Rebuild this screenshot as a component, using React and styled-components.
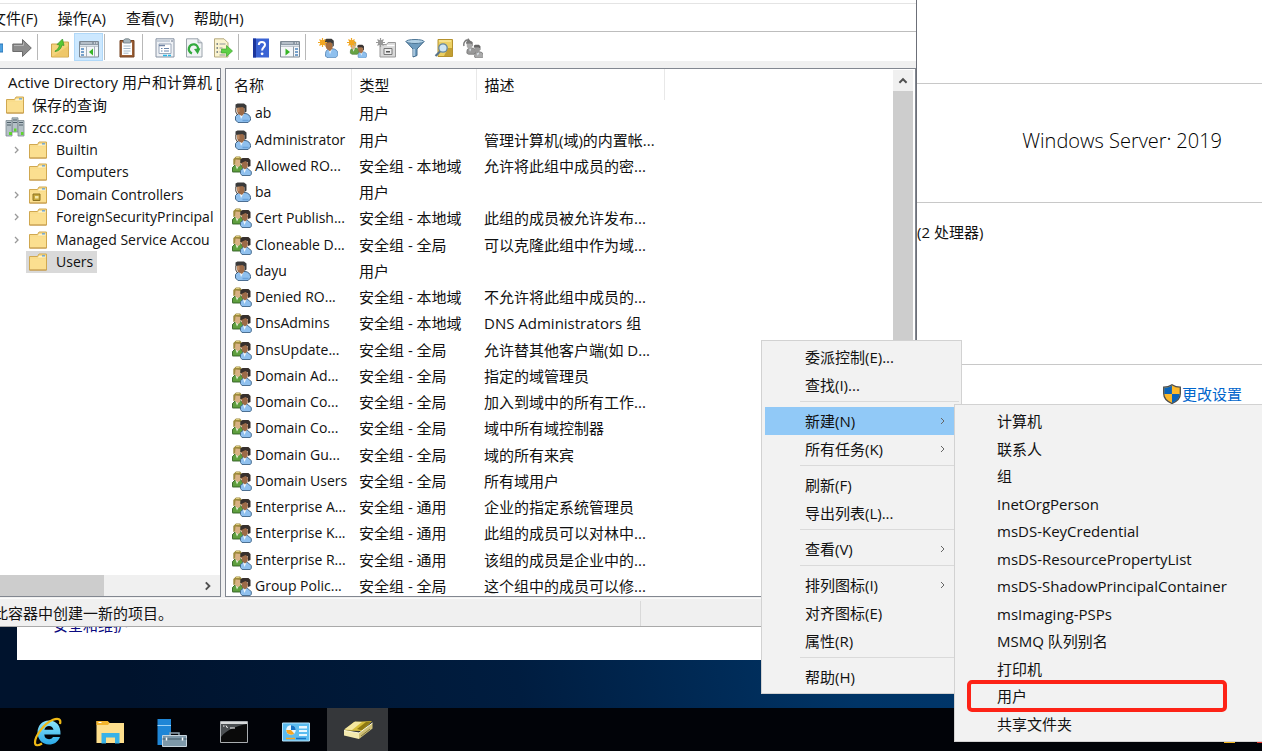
import React from "react";
import styled, { createGlobalStyle } from "styled-components";

const GlobalStyle = createGlobalStyle`
  * { box-sizing: border-box; }
  body {
    margin: 0;
    font-family: "Open Sans", "Noto Sans CJK SC", sans-serif;
    font-size: 15px;
    line-height: 20px;
    color: #111;
  }
  button {
    font: inherit;
    color: inherit;
    background: none;
    border: 0;
    padding: 0;
    text-align: left;
  }
`;

/* ---------- text ---------- */

const Latin = styled.span`
  font-size: 14px;
`;

// In dense lists Latin runs are set one size below the Chinese text around them.
function Text({ children }) {
  return children
    .split(/([\u2e80-\u9fff\u3000-\u303f]+)/)
    .filter(Boolean)
    .map((run, i) =>
      /[\u2e80-\u9fff]/.test(run) ? run : <Latin key={i}>{run}</Latin>
    );
}

/* ---------- icons ---------- */

const Icon = styled.svg`
  display: block;
  flex: none;
  width: ${(p) => p.$size || 20}px;
  height: ${(p) => p.$size || 20}px;
`;

const PersonShape = ({ hair = "#3b3a39", face = "#a9744c", shirt = "#8fc0ee", edge = "#4f7fae" }) => (
  <g>
    <path d="M6 15.500c0-3 2-5 4.500-5h2.500c3 0 5.500 2 5.500 5v1.500l-2.500 2.500H8.500L6 18z" fill={shirt} stroke={edge} strokeWidth=".8" />
    <path d="M9 11l1.500 5 2-5z" fill="#e9f3fc" />
    <path d="M5.500 3h6l1.500 3v4l-2.500 3L7 10.500 6 8z" fill={face} />
    <path d="M5 4.500V1.500L7 .5h5l2.300 2v5L13 9V5.500L11 4z" fill={hair} />
  </g>
);

const UserIcon = () => (
  <Icon viewBox="0 0 20 20">
    <path d="M3.500 13.500l3-3h6.500c3 0 5.500 2.500 5.500 5v1.500L16 19.600H6L3.500 17z" fill="#8fc0ee" stroke="#3f6488" />
    <path d="M7.500 10.500l1.500 5.500 3-5.500z" fill="#eef6fd" />
    <path d="M10.500 17.500h6" stroke="#6ba3da" strokeWidth="1.500" />
    <path d="M4.500 3h6.500l1.500 3v4l-2.500 3L6 11 5 8z" fill="#9c6b48" />
    <path d="M5 4h2.500v5H5z" fill="#bf8b62" />
    <path d="M3.500 5V1.500L5.500.4h6.500l2.500 2v6L12.500 10V5.500L10.500 4z" fill="#3a3a3a" />
    <path d="M3.800 5v4l1.700 3" fill="none" stroke="#4a4038" />
  </Icon>
);

const GroupShape = ({ gray }) => (
  <g>
    <g transform="translate(-4.500 -.5) scale(.82)">
      <PersonShape
        hair={gray ? "#777" : "#b9a65e"}
        face={gray ? "#aaa" : "#d9b387"}
        shirt={gray ? "#999" : "#67a344"}
        edge={gray ? "#555" : "#39702a"}
      />
    </g>
    <g transform="translate(4.500 4) scale(.82)">
      <PersonShape
        hair={gray ? "#666" : "#3b3533"}
        face={gray ? "#999" : "#a9744c"}
        shirt={gray ? "#aaa" : "#8fc0ee"}
        edge={gray ? "#555" : "#4f7fae"}
      />
    </g>
  </g>
);

const GroupIcon = () => (
  <Icon viewBox="0 0 20 20">
    <path d="M.5 15.500v-4l3-3h5l3 4v3.500H.5z" fill="#5f9f3e" stroke="#2f5f23" strokeWidth=".9" />
    <path d="M3.500 9.500l1.500 4 2-4z" fill="#e3efd9" />
    <path d="M2.500 3h5l1.500 3-1 4-2.500 1-2.500-2z" fill="#d8b184" />
    <path d="M1.300 9V3L4 .6h4L10 3v5L8.500 7V4L3.500 3.500 3 8.500z" fill="#9d8a3c" />
    <path d="M4 1.500h3.500" stroke="#dccb7c" />
    <path d="M8.500 17.500v-3l3-2.500h3.500l4.300 3.500v3L18 19.500h-8z" fill="#8fc0ee" stroke="#3f6488" strokeWidth=".9" />
    <path d="M11 12.500l1.500 4.500 2-4.500z" fill="#eef6fd" />
    <path d="M9 5h6l1 3-.5 3.500-2.500 2L10 11z" fill="#9c6b48" />
    <path d="M8.300 7.500V3.500L10.500 2h6L18.500 4v6L16 11V6.500L13.500 5z" fill="#37302d" />
  </Icon>
);

const FolderShape = () => (
  <g>
    <path d="M1.500 18V4.500h8l1.500-2.500h7.500V18z" fill="#f9dc8b" stroke="#d0a850" />
    <path d="M2 17.500V7h16v10.500z" fill="#fbdf90" />
    <path d="M11 4h6.500v1.500H10z" fill="#fdf3cf" />
    <path d="M14 3.200h3v1.300h-3z" fill="#5f9fd8" />
    <path d="M1.500 18h17" stroke="#c1964a" />
  </g>
);

const FolderIcon = ({ ou }) => (
  <Icon viewBox="0 0 20 20">
    <FolderShape />
    {ou && <path d="M5 9h7v6.500H5z" fill="#c8a83d" stroke="#8c7221" />}
    {ou && <path d="M7 11h3.500v2.500H7z" fill="#f4e7a6" />}
  </Icon>
);

const DomainIcon = () => (
  <Icon viewBox="0 0 20 20">
    <g fill="#b4c0c6" stroke="#7b8990" strokeWidth=".8">
      <path d="M7 .8h6V15H7z" />
      <path d="M1 3.500h6V19H1z" />
      <path d="M13 3.500h6V19h-6z" />
    </g>
    <path d="M2 5.500h4M2 8h4M14 5.500h4M14 8h4M8 3h4M8 5.500h4" stroke="#50606a" />
    <path d="M4 15h3v3H4zM16 15h2.500v3H16zM9 11.500h2.500v3H9z" fill="#5fd62c" />
  </Icon>
);

const BackIcon = () => (
  <Icon viewBox="0 0 20 20">
    <path d="M1 10l8-7v3h11v8H9v3z" fill="#4ea1e0" stroke="#2b77b8" />
  </Icon>
);
const ForwardIcon = () => (
  <Icon viewBox="0 0 20 20">
    <path d="M19.300 10L10.500 1.500v4.500H.8v7.500h9.700v5z" fill="#8c8c8c" stroke="#626262" strokeWidth=".9" />
    <path d="M2 7.500h9.500V4.500" stroke="#b4b4b4" fill="none" />
  </Icon>
);
const FolderUpIcon = () => (
  <Icon viewBox="0 0 20 20">
    <path d="M1.500 19V6h10l1.500-2h5.500v15z" fill="#f4d37c" stroke="#cfa64f" />
    <path d="M2 19L18 8v11z" fill="#e9bf5e" opacity=".6" />
    <path d="M5 13c2-1 4-3 4.500-6L7 6.500 12.500 1 14 7.500l-2-.5c-1 4-3 6-7 6.500z" fill="#57c832" stroke="#37972a" strokeWidth=".7" />
  </Icon>
);
const PaneIcon = ({ flip }) => (
  <Icon viewBox="0 0 20 20">
    <path d="M.5 3.500h19v15.500H.5z" fill="#f5f7f9" stroke="#7c8893" />
    <path d="M1 4h18v4.500H1z" fill="#8d99a5" />
    <path d="M2 5h11M1 7.500h18" stroke="#dce3ea" />
    <path d="M15 5h1M17 5h1.500" stroke="#fff" />
    {flip ? (
      <g>
        <path d="M13.500 8.500V19" stroke="#8d99a5" />
        <path d="M15 11h3M15 14h3M15 17h3" stroke="#4d86bd" strokeWidth="1.300" />
        <path d="M5.500 10.500l4.500 3.500-4.500 3.500z" fill="#37b526" />
      </g>
    ) : (
      <g>
        <path d="M7.500 8.500V19M15.500 8.500V19" stroke="#a5afb9" />
        <path d="M2 11h3M2 14h3M2 17h3" stroke="#4d86bd" strokeWidth="1.300" />
        <path d="M14 10.500v7L10 14z" fill="#37b526" />
      </g>
    )}
  </Icon>
);
const ClipboardIcon = () => (
  <Icon viewBox="0 0 20 20">
    <path d="M3 2.500h14v16.500H3z" fill="#9b5f36" stroke="#744321" />
    <path d="M5 4.500h10V17H5z" fill="#fdfefe" />
    <path d="M6.500 8h7M6.500 10.500h7M6.500 13h7M6.500 15.200h5" stroke="#a4b8c8" />
    <path d="M6.500 2L8.500.8h3l2 1.200v3h-7z" fill="#a7b4ba" stroke="#6c7a80" strokeWidth=".8" />
  </Icon>
);
const PropertiesIcon = () => (
  <Icon viewBox="0 0 20 20">
    <path d="M1 .8h18V19H1z" fill="#eef1f5" stroke="#8893a3" />
    <path d="M2 3h13" stroke="#b9c3d0" strokeWidth="1.500" />
    <path d="M16 3h2" stroke="#68758a" />
    <path d="M4 6h12v9.500H4z" fill="#fff" stroke="#9aa7ba" />
    <path d="M4 7.500h6" stroke="#7185a5" strokeWidth="1.500" />
    <path d="M6 10.500h1.500M9 10.500h5M6 13h1.500M9 13h5" stroke="#6b86ab" />
    <path d="M8 17.500h4M13 17.500h3" stroke="#27b5e4" strokeWidth="1.500" />
  </Icon>
);
const RefreshIcon = () => (
  <Icon viewBox="0 0 20 20">
    <path d="M2.500.8H14l4 4V19H2.500z" fill="#f1f3f5" stroke="#9aa3ab" />
    <path d="M14 .8v4h4" fill="#d8dde2" stroke="#9aa3ab" />
    <path d="M8 15.300a4.600 4.600 0 1 1 6-3.600" fill="none" stroke="#33aa3e" strokeWidth="2.400" />
    <path d="M10 11l6.500-.8-2.800 6z" fill="#33aa3e" />
  </Icon>
);
const ExportIcon = () => (
  <Icon viewBox="0 0 20 20">
    <path d="M1.500.8H11l4 4V19H1.500z" fill="#faf3cf" stroke="#b5aa7f" />
    <path d="M3.500 6h1.500M3.500 10h1.500M3.500 14h1.500" stroke="#5d6b76" strokeWidth="1.400" />
    <path d="M6.500 6h6M6.500 10h3M6.500 14h5M6.500 17h6" stroke="#8d949a" />
    <path d="M8.500 11h5V7.500l6 5.500-6 5.500V15h-5z" fill="#5fd046" stroke="#3da32f" strokeWidth=".7" />
  </Icon>
);
const HelpIcon = () => (
  <Icon viewBox="0 0 20 20">
    <path d="M2 .5h16v19H2z" fill="#3a63d4" />
    <path d="M2 .5h3v19H2z" fill="#1c369c" />
    <path d="M7.800 7c0-4 6.200-4 6.200-.3 0 2.600-2.900 2.500-2.900 5.800" fill="none" stroke="#fff" strokeWidth="2" />
    <circle cx="11.100" cy="15.800" r="1.400" fill="#fff" />
  </Icon>
);
const Spark = ({ color = "#f2a621" }) => (
  <g stroke={color}>
    <path d="M4.500 0v9M0 4.500h9M1.500 1.500l6 6M7.500 1.500l-6 6" strokeWidth="1.200" />
    <circle cx="4.500" cy="4.500" r="2.200" fill={color} />
  </g>
);
const NewUserIcon = () => (
  <Icon viewBox="0 0 20 20">
    <g transform="translate(1.500 .3)"><PersonShape face="#a86f3f" /></g>
    <Spark />
  </Icon>
);
const NewGroupIcon = () => (
  <Icon viewBox="0 0 20 20">
    <g transform="translate(3 3) scale(.86)"><GroupShape /></g>
    <Spark />
  </Icon>
);
const NewOuIcon = () => (
  <Icon viewBox="0 0 20 20">
    <path d="M4 19V6.500h6.500L12 4.500h7.500V19z" fill="#d9d9d9" stroke="#999" />
    <path d="M11 7.500h7.500" stroke="#fff" strokeWidth="1.300" />
    <path d="M8 10.500h8v6H8z" fill="#ececec" stroke="#777" />
    <path d="M10 13h4v1.500h-4z" fill="#555" />
    <Spark color="#989898" />
  </Icon>
);
const FilterIcon = () => (
  <Icon viewBox="0 0 20 20">
    <path d="M1 3.500L8 11v8l4-1.500V11l7-7.500z" fill="#6f9dc0" stroke="#41698a" />
    <path d="M9 11v7" stroke="#c6dcec" strokeWidth="1.300" />
    <ellipse cx="10" cy="3.500" rx="9" ry="2" fill="#b4d2e6" stroke="#4e7797" />
  </Icon>
);
const FindIcon = () => (
  <Icon viewBox="0 0 20 20">
    <path d="M4 1.500h14.500v17H4z" fill="#ecd063" stroke="#b5922e" />
    <path d="M14 10h4v8h-8z" fill="#c39f32" />
    <path d="M5 3h12" stroke="#fff2b4" />
    <circle cx="9" cy="10" r="4.200" fill="#cfe6f2" stroke="#66869b" strokeWidth="1.300" />
    <path d="M6 13.500L1.500 18" stroke="#58738a" strokeWidth="2.200" />
  </Icon>
);
const AddToGroupIcon = () => (
  <Icon viewBox="0 0 20 20">
    <g transform="translate(3.500 3) scale(.86)"><GroupShape gray /></g>
    <path d="M1 8C0 4 3 1 6 2.500" fill="none" stroke="#777" strokeWidth="1.400" />
    <path d="M5 0l3 3.500-4 1z" fill="#777" />
  </Icon>
);

const ShieldIcon = () => (
  <Icon viewBox="0 0 20 20">
    <path d="M10 .8c3 2 5.500 2.400 8.300 2.400v6.300c0 5-3.500 8-8.300 10-4.800-2-8.300-5-8.300-10V3.200C4.500 3.200 7 2.800 10 .8z" fill="#fdb92b" stroke="#4d4d4d" strokeWidth="1.300" />
    <path d="M9.900 1.600v8.400H2.300V3.800c3 0 5.200-.6 7.600-2.200z" fill="#0a63b9" />
    <path d="M10 10h7.700c-.3 4.500-3.500 7.200-7.700 8.900z" fill="#0a63b9" />
  </Icon>
);

const Chevron = ({ d = "M4 2l3 3-3 3", size = 10, color = "#666", width = 1 }) => (
  <Icon $size={size} viewBox="0 0 10 10">
    <path d={d} fill="none" stroke={color} strokeWidth={width} />
  </Icon>
);

/* ---------- taskbar icons ---------- */

const ExplorerIcon = () => (
  <Icon $size={30} viewBox="0 0 30 30">
    <defs>
      <linearGradient id="ie" x1="0" y1="0" x2="0" y2="1">
        <stop offset="0" stopColor="#8fe6fb" />
        <stop offset="1" stopColor="#2aa9e8" />
      </linearGradient>
    </defs>
    <path
      d="M16 3.500C9 3.500 4.500 9 4.500 15.500c0 7 5 12 11.500 12 5 0 9-2.500 11-7.500h-7c-1 1.600-2.300 2.200-4 2.200-2.800 0-4.600-1.800-4.700-4.700h16.200C28 9 23.500 3.500 16 3.500zm-4.600 9.300C12 10.500 13.600 9 16 9s4 1.500 4.500 3.800z"
      fill="url(#ie)"
    />
    <path d="M9 26.500c-4 2.500-7 2.500-7-1C2 19 11 6.500 20 2.800c5-2 8.500-.8 7 4.200" fill="none" stroke="#efb915" strokeWidth="2.200" />
  </Icon>
);
const FilesIcon = () => (
  <Icon $size={30} viewBox="0 0 30 30">
    <path d="M1.500 4h11l2 2h14.500v20H1.500z" fill="#fddf8d" />
    <path d="M1.500 4h11l2 2-1.500 2H1.500z" fill="#f3b52e" />
    <path d="M3.500 5.500h3" stroke="#fff" />
    <path d="M6.500 26.500V16h18v10.500h-4.500v-6h-9v6z" fill="#38b2e8" />
  </Icon>
);
const ServerIcon = () => (
  <Icon $size={30} viewBox="0 0 30 30">
    <path d="M.5 2h13.500v26H.5z" fill="#1f86d6" />
    <path d="M.5 8.500H14" stroke="#9fd2f5" />
    <path d="M13 18v-2h9v2" fill="none" stroke="#90a4b0" strokeWidth="1.500" />
    <path d="M5.500 18.500h24V29.500h-24z" fill="#7d98a9" stroke="#c7d5de" />
    <path d="M5.500 22h24" stroke="#3f5664" />
    <path d="M9.500 20.500v3M25.500 20.500v3" stroke="#fff" strokeWidth="1.500" />
  </Icon>
);
const ConsoleIcon = () => (
  <Icon $size={30} viewBox="0 0 30 30">
    <path d="M1.500 4.500h27v21h-27z" fill="#0a0a0a" stroke="#a9adb0" />
    <path d="M2 5h26v2H2z" fill="#d8dadb" />
    <path d="M2 7h26C18 9 8 12 2 20z" fill="#4b4f52" />
    <path d="M4 9h1.500M7 8.500l1.500 2.500M11 11h5" stroke="#fff" />
  </Icon>
);
const DashboardIcon = () => (
  <Icon $size={30} viewBox="0 0 30 30">
    <path d="M1.500 6h27v18h-27z" fill="#5bbcf0" stroke="#b8e4fb" />
    <circle cx="10" cy="13" r="4.800" fill="#e9f6fd" />
    <path d="M10 13V8.200a4.800 4.800 0 0 1 4.800 4.800z" fill="#1673c4" />
    <path d="M10 13h-4.800a4.800 4.800 0 0 0 8 3.500z" fill="#f6a623" />
    <path d="M18 9h8v2.500h-8zM18 13h8v2h-8zM18 17h8v2h-8z" fill="#e9f6fd" />
    <path d="M5 21.500h9" stroke="#f6a623" strokeWidth="1.500" />
    <path d="M15 21.500h10" stroke="#1673c4" strokeWidth="1.500" />
  </Icon>
);
const DirectoryIcon = () => (
  <Icon $size={30} viewBox="0 0 30 30">
    <path d="M1 13.500L11 5l18-1-10 10z" fill="#d7be3a" />
    <path d="M1 12.500L12 4.500l7 .5L9 13z" fill="#f4e7a0" />
    <path d="M14 12l9-7 5-.5-9 9z" fill="#8e7913" />
    <path d="M1 13.500L16 16v6L1 18.500z" fill="#f3e9ae" />
    <path d="M16 16L29.500 6v5.500L16 22z" fill="#cfc077" />
    <path d="M1 13.500L16 16 29.500 6" fill="none" stroke="#fffbdc" />
    <path d="M18 19l9-7" stroke="#877b3e" />
  </Icon>
);

/* ---------- desktop ---------- */

const Desktop = styled.div`
  position: relative;
  display: flex;
  flex-direction: column;
  justify-content: flex-end;
  min-height: 100vh;
  overflow: hidden;
  background: linear-gradient(80deg, #00132d 10%, #001d40 38%, #003466 62%, #003b74 100%);
`;

const SystemWindow = styled.section`
  position: absolute;
  top: 0;
  right: 0;
  bottom: 91px;
  left: 17px;
  display: flex;
  flex-direction: column;
  background: #fff;
`;

const SystemSection = styled.div`
  flex: none;
  display: flex;
  justify-content: flex-end;
  align-items: ${(p) => p.$align || "center"};
  height: ${(p) => p.$height}px;
  padding: ${(p) => p.$padding || "0"};
  border-bottom: ${(p) => (p.$last ? "0" : "1px solid #c8c8c8")};
`;

const Brand = styled.h1`
  margin: 0;
  font-size: 20px;
  font-weight: 300;
  line-height: 28px;
  color: #000;
  sup {
    font-size: 12px;
    line-height: 12px;
    vertical-align: 4px;
  }
`;

const Processor = styled.p`
  margin: 0;
  width: 345px;
`;

const SettingsLink = styled.a`
  display: flex;
  align-items: center;
  color: #0066cc;
  text-decoration: none;
`;

const SecurityLink = styled.a`
  margin: auto auto 25px 36px;
  color: #0a0a80;
  text-decoration: none;
`;

/* ---------- console window ---------- */

const ConsoleWindow = styled.main`
  position: absolute;
  top: 0;
  right: 345px;
  bottom: 124px;
  left: -24px;
  display: flex;
  flex-direction: column;
  background: #f0f0f0;
  border-right: 1px solid #6c6f78;
  border-bottom: 1px solid #a9a9a9;
`;

const TitleEdge = styled.div`
  flex: none;
  height: 4px;
  background: #fff;
  border-bottom: 1px solid #e4e4e4;
`;

const MenuBar = styled.nav`
  flex: none;
  display: flex;
  height: 28px;
  padding-left: 5px;
  background: #fff;
  border-bottom: 1px solid #bdbdbd;
`;

const MenuBarItem = styled.button`
  padding: 0 10px;
  white-space: nowrap;
`;

const ToolBar = styled.div`
  flex: none;
  display: flex;
  align-items: center;
  height: 29px;
  padding-left: 2px;
  background: #fff;
`;

const ToolButton = styled.button`
  display: flex;
  align-items: center;
  justify-content: center;
  width: 29px;
  height: 28px;
  padding-top: 2px;
  background: ${(p) => (p.$active ? "#cce8ff" : "none")};
  box-shadow: ${(p) => (p.$active ? "inset 0 0 0 1px #b0d8f8" : "none")};
`;

const ToolDivider = styled.span`
  width: 1px;
  height: 26px;
  margin: 0 7px 0 1px;
  background: #b8b8b8;
`;

const Panes = styled.div`
  flex: 1;
  min-height: 0;
  display: flex;
  gap: 4px;
  padding: 7px 0 1px;
`;

const Pane = styled.div`
  display: flex;
  flex-direction: ${(p) => (p.$row ? "row" : "column")};
  flex: ${(p) => (p.$width ? "none" : "1")};
  width: ${(p) => (p.$width ? p.$width + "px" : "auto")};
  min-width: 0;
  overflow: hidden;
  background: #fff;
  border: 1px solid #828790;
`;

const Tree = styled.ul`
  flex: 1;
  margin: 0;
  padding: 2px 0 0;
  list-style: none;
  overflow: hidden;
`;

const TreeRow = styled.li`
  display: flex;
  align-items: center;
  height: 22px;
  padding-left: 28px;
  white-space: nowrap;
  &:nth-child(even) { height: 23px; }
`;

const TreeToggle = styled.span`
  flex: none;
  display: flex;
  justify-content: center;
  width: 21px;
`;

const TreeLabel = styled.span`
  display: flex;
  align-items: center;
  gap: 8px;
  height: 100%;
  padding: 0 4px 0 2px;
  background: ${(p) => (p.$selected ? "#d9d9d9" : "none")};
`;

const RootLabel = styled.span`
  padding-left: 3px;
`;

const TopLabel = styled(TreeLabel)`
  gap: 7px;
  padding-left: 0;
`;

const ScrollBar = styled.div`
  flex: none;
  display: flex;
  flex-direction: ${(p) => (p.$vertical ? "column" : "row")};
  background: #f0f0f0;
  ${(p) => (p.$vertical ? "width: 20px; margin: 1px 2px 0 0;" : "height: 21px;")}
`;

const ScrollThumb = styled.span`
  flex: ${(p) => p.$flex};
  background: #cdcdcd;
`;

const ScrollTrack = styled.span`
  flex: 1;
`;

const ScrollArrow = styled.button`
  display: flex;
  align-items: center;
  justify-content: center;
  width: ${(p) => p.$width}px;
  height: 21px;
`;

const ListArea = styled.div`
  flex: 1;
  min-width: 0;
  overflow: hidden;
`;

const List = styled.table`
  width: 100%;
  table-layout: fixed;
  border-collapse: collapse;
  white-space: nowrap;
  th, td {
    padding: 0 0 0 8px;
    text-align: left;
    font-weight: 400;
  }
`;

const HeadRow = styled.tr`
  height: 31px;
  th { border-right: 1px solid #e8e8e8; }
  th:last-child { border-right: 0; }
`;

const ListRow = styled.tr`
  height: 26px;
  &:nth-child(4n + 2) { height: 27px; }
`;

const NameCell = styled.span`
  display: flex;
  align-items: center;
  gap: 3px;
  margin-left: -2px;
`;

const StatusBar = styled.footer`
  flex: none;
  display: flex;
  height: 28px;
  padding: 2px 0 0 17px;
  border-top: 1px solid #fbfbfb;
  line-height: 24px;
`;

const StatusCell = styled.span`
  width: 648px;
  border-right: 1px solid #d9d9d9;
`;

/* ---------- popup menus ---------- */

const Menu = styled.div`
  position: absolute;
  top: ${(p) => p.$top}px;
  right: ${(p) => p.$right}px;
  width: ${(p) => p.$width}px;
  display: flex;
  flex-direction: column;
  padding: ${(p) => p.$padding};
  background: #f2f2f2;
  border: 1px solid #d2d2d2;
`;

const MenuItem = styled.button`
  display: flex;
  align-items: center;
  justify-content: space-between;
  flex: none;
  height: 28px;
  padding: 0 12px 0 40px;
  white-space: nowrap;
  background: ${(p) => (p.$active ? "#91c9f7" : "none")};
`;

const SubMenuItem = styled(MenuItem)`
  padding-left: 39px;
  &:nth-child(even) { height: 27px; }
  ${(p) => p.$marked && "outline: 4px solid #fd2317; outline-offset: -2px; border-radius: 3px; margin: 0 34px 0 11px; padding-left: 28px;"}
`;

const MenuRule = styled.hr`
  width: calc(100% - 35px);
  height: 8px;
  margin: 0 0 0 35px;
  border: 0;
  background: linear-gradient(#dadada, #dadada) 0 2px / 100% 1px no-repeat;
`;

/* ---------- taskbar ---------- */

const TaskBar = styled.footer`
  display: flex;
  gap: 1px;
  height: 43px;
  padding-left: 17px;
  background: #010308;
`;

const TaskButton = styled.button`
  display: flex;
  align-items: center;
  justify-content: center;
  width: 61px;
  padding-top: 5px;
  background: ${(p) => (p.$active ? "#35373a" : "none")};
`;

const Tray = styled.div`
  display: flex;
  gap: 22px;
  margin-left: auto;
  padding-top: 32px;
`;

const TrayMark = styled.span`
  width: ${(p) => p.$width}px;
  height: 3px;
  background: ${(p) => p.$color};
`;

/* ---------- content ---------- */

const tools = [
  ["后退", BackIcon], ["前进", ForwardIcon], null,
  ["向上", FolderUpIcon], ["显示控制台树", PaneIcon, true], null,
  ["粘贴", ClipboardIcon], null,
  ["属性", PropertiesIcon], ["刷新", RefreshIcon], ["导出列表", ExportIcon], null,
  ["帮助", HelpIcon], ["操作窗格", () => <PaneIcon flip />], null,
  ["新建用户", NewUserIcon], ["新建组", NewGroupIcon], ["新建组织单位", NewOuIcon],
  ["筛选器", FilterIcon], ["查找", FindIcon], ["添加到组", AddToGroupIcon],
];

const tree = [
  { label: "Builtin", toggle: true },
  { label: "Computers" },
  { label: "Domain Controllers", toggle: true, ou: true },
  { label: "ForeignSecurityPrincipal", toggle: true },
  { label: "Managed Service Accou", toggle: true },
  { label: "Users", selected: true },
];

const LOCAL = "安全组 - 本地域";
const GLOBAL = "安全组 - 全局";
const UNIVERSAL = "安全组 - 通用";

const entries = [
  ["ab", "用户", ""],
  ["Administrator", "用户", "管理计算机(域)的内置帐..."],
  ["Allowed RO...", LOCAL, "允许将此组中成员的密..."],
  ["ba", "用户", ""],
  ["Cert Publish...", LOCAL, "此组的成员被允许发布..."],
  ["Cloneable D...", GLOBAL, "可以克隆此组中作为域..."],
  ["dayu", "用户", ""],
  ["Denied RO...", LOCAL, "不允许将此组中成员的..."],
  ["DnsAdmins", LOCAL, "DNS Administrators 组"],
  ["DnsUpdate...", GLOBAL, "允许替其他客户端(如 D..."],
  ["Domain Ad...", GLOBAL, "指定的域管理员"],
  ["Domain Co...", GLOBAL, "加入到域中的所有工作..."],
  ["Domain Co...", GLOBAL, "域中所有域控制器"],
  ["Domain Gu...", GLOBAL, "域的所有来宾"],
  ["Domain Users", GLOBAL, "所有域用户"],
  ["Enterprise A...", UNIVERSAL, "企业的指定系统管理员"],
  ["Enterprise K...", UNIVERSAL, "此组的成员可以对林中..."],
  ["Enterprise R...", UNIVERSAL, "该组的成员是企业中的..."],
  ["Group Polic...", GLOBAL, "这个组中的成员可以修..."],
];

const contextItems = [
  { label: "委派控制(E)..." }, { label: "查找(I)..." }, null,
  { label: "新建(N)", more: true, active: true }, { label: "所有任务(K)", more: true }, null,
  { label: "刷新(F)" }, { label: "导出列表(L)..." }, null,
  { label: "查看(V)", more: true }, null,
  { label: "排列图标(I)", more: true }, { label: "对齐图标(E)" }, { label: "属性(R)" }, null,
  { label: "帮助(H)" },
];

const newItems = [
  "计算机", "联系人", "组", "InetOrgPerson", "msDS-KeyCredential",
  "msDS-ResourcePropertyList", "msDS-ShadowPrincipalContainer",
  "msImaging-PSPs", "MSMQ 队列别名", "打印机", "用户", "共享文件夹",
];

const taskIcons = [ExplorerIcon, FilesIcon, ServerIcon, ConsoleIcon, DashboardIcon, DirectoryIcon];
const taskNames = ["Internet Explorer", "文件资源管理器", "服务器管理器", "命令提示符", "控制面板", "Active Directory"];

export default function App() {
  return (
    <Desktop>
      <GlobalStyle />

      <SystemWindow>
        <SystemSection $height={84} />
        <SystemSection $height={119} $padding="0 40px 4px 0">
          <Brand>Windows Server<sup>•</sup> 2019</Brand>
        </SystemSection>
        <SystemSection $height={162} $align="flex-start" $padding="19px 0 0">
          <Processor>(2 处理器)</Processor>
        </SystemSection>
        <SystemSection $height={58} $last $padding="0 20px 0 0">
          <SettingsLink href="#settings"><ShieldIcon />更改设置</SettingsLink>
        </SystemSection>
        <SecurityLink href="#security">安全和维护</SecurityLink>
      </SystemWindow>

      <ConsoleWindow>
        <TitleEdge />
        <MenuBar>
          {["文件(F)", "操作(A)", "查看(V)", "帮助(H)"].map((label) => (
            <MenuBarItem key={label}>{label}</MenuBarItem>
          ))}
        </MenuBar>
        <ToolBar>
          {tools.map((tool, i) => {
            if (!tool) return <ToolDivider key={i} />;
            const [name, Glyph, active] = tool;
            return (
              <ToolButton key={i} aria-label={name} $active={active}><Glyph /></ToolButton>
            );
          })}
        </ToolBar>

        <Panes>
          <Pane $width={245}>
            <Tree>
              <TreeRow>
                <RootLabel>Active Directory 用户和计算机 [</RootLabel>
              </TreeRow>
              <TreeRow>
                <TopLabel><FolderIcon />保存的查询</TopLabel>
              </TreeRow>
              <TreeRow>
                <TopLabel><DomainIcon />zcc.com</TopLabel>
              </TreeRow>
              {tree.map((node) => (
                <TreeRow key={node.label}>
                  <TreeToggle>{node.toggle && <Chevron color="#999" width={1.3} />}</TreeToggle>
                  <TreeLabel $selected={node.selected}>
                    <FolderIcon ou={node.ou} />
                    <Text>{node.label}</Text>
                  </TreeLabel>
                </TreeRow>
              ))}
            </Tree>
            <ScrollBar>
              <ScrollThumb $flex="0 0 127px" />
              <ScrollTrack />
              <ScrollArrow $width={27} aria-label="向右滚动">
                <Chevron size={12} color="#505050" width={1.6} d="M4 2l3 3-3 3" />
              </ScrollArrow>
            </ScrollBar>
          </Pane>

          <Pane $row>
            <ListArea>
              <List>
                <colgroup>
                  <col width="125" /><col width="125" /><col width="188" /><col />
                </colgroup>
                <thead>
                  <HeadRow><th>名称</th><th>类型</th><th>描述</th><th /></HeadRow>
                </thead>
                <tbody>
                  {entries.map(([name, type, note], i) => (
                    <ListRow key={i}>
                      <td>
                        <NameCell>
                          {type === "用户" ? <UserIcon /> : <GroupIcon />}
                          <Text>{name}</Text>
                        </NameCell>
                      </td>
                      <td>{type}</td>
                      <td>{note}</td>
                      <td />
                    </ListRow>
                  ))}
                </tbody>
              </List>
            </ListArea>
            <ScrollBar $vertical>
              <ScrollArrow $width={20} aria-label="向上滚动">
                <Chevron size={12} color="#505050" width={1.6} d="M2 6.5l3-3 3 3" />
              </ScrollArrow>
              <ScrollThumb $flex="3" />
              <ScrollTrack />
            </ScrollBar>
          </Pane>
        </Panes>

        <StatusBar><StatusCell>此容器中创建一新的项目。</StatusCell></StatusBar>
      </ConsoleWindow>

      <TaskBar>
        {taskIcons.map((Glyph, i) => (
          <TaskButton key={i} aria-label={taskNames[i]} $active={i === 5}><Glyph /></TaskButton>
        ))}
        <Tray>
          <TrayMark $width={11} $color="#f4b71e" />
          <TrayMark $width={5} $color="#e5352b" />
        </Tray>
      </TaskBar>

      <Menu role="menu" $top={340} $right={300} $width={201} $padding="2px 2px 2px 3px">
        {contextItems.map((item, i) =>
          item ? (
            <MenuItem key={i} role="menuitem" $active={item.active}>
              <span>{item.label}</span>
              {item.more && <Chevron />}
            </MenuItem>
          ) : (
            <MenuRule key={i} />
          )
        )}
      </Menu>

      <Menu role="menu" $top={404} $right={-1} $width={309} $padding="2px 3px 4px">
        {newItems.map((label) => (
          <SubMenuItem key={label} role="menuitem" $marked={label === "用户"}>
            <span>{label}</span>
          </SubMenuItem>
        ))}
      </Menu>
    </Desktop>
  );
}
